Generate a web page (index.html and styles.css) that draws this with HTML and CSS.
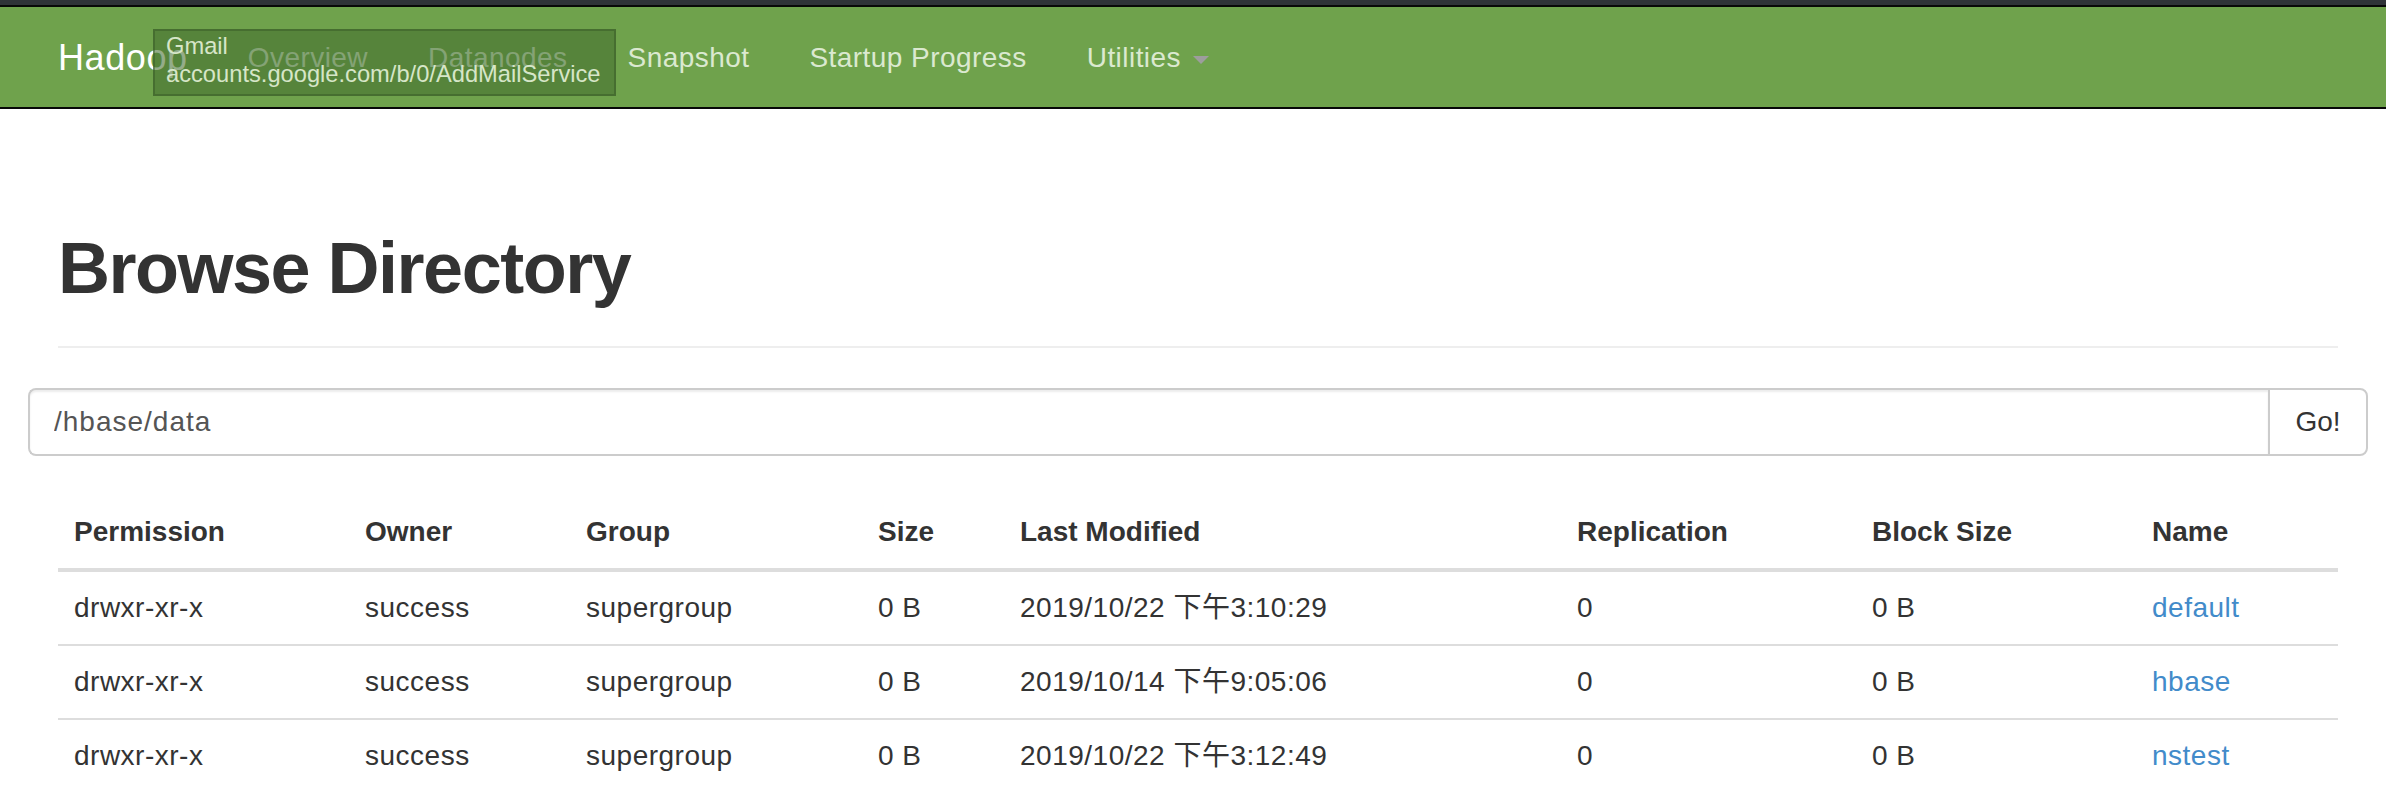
FILE: index.html
```html
<!DOCTYPE html>
<html lang="en">
<head>
<meta charset="utf-8">
<title>Browsing HDFS</title>
<link rel="stylesheet" href="styles.css">
</head>
<body>
<div class="chrome-strip"></div>
<header class="navbar">
  <div class="navbar-inner">
    <a class="brand" href="#">Hadoop</a>
    <ul class="nav">
      <li><a href="#">Overview</a></li>
      <li><a href="#">Datanodes</a></li>
      <li><a href="#">Snapshot</a></li>
      <li><a href="#">Startup Progress</a></li>
      <li><a href="#">Utilities <b class="caret"></b></a></li>
    </ul>
  </div>
</header>
<div class="tooltip">
  <div>Gmail</div>
  <div>accounts.google.com/b/0/AddMailService</div>
</div>
<main class="container">
  <div class="page-header">
    <h1>Browse Directory</h1>
  </div>
  <div class="input-group">
    <input class="form-control" type="text" value="/hbase/data">
    <button class="btn" type="button">Go!</button>
  </div>
  <table class="table">
    <colgroup>
      <col class="c-perm">
      <col class="c-owner">
      <col class="c-group">
      <col class="c-size">
      <col class="c-mod">
      <col class="c-rep">
      <col class="c-block">
      <col class="c-name">
    </colgroup>
    <thead>
      <tr>
        <th>Permission</th>
        <th>Owner</th>
        <th>Group</th>
        <th>Size</th>
        <th>Last Modified</th>
        <th>Replication</th>
        <th>Block Size</th>
        <th>Name</th>
      </tr>
    </thead>
    <tbody>
      <tr>
        <td>drwxr-xr-x</td>
        <td>success</td>
        <td>supergroup</td>
        <td>0 B</td>
        <td>2019/10/22 下午3:10:29</td>
        <td>0</td>
        <td>0 B</td>
        <td><a href="#">default</a></td>
      </tr>
      <tr>
        <td>drwxr-xr-x</td>
        <td>success</td>
        <td>supergroup</td>
        <td>0 B</td>
        <td>2019/10/14 下午9:05:06</td>
        <td>0</td>
        <td>0 B</td>
        <td><a href="#">hbase</a></td>
      </tr>
      <tr>
        <td>drwxr-xr-x</td>
        <td>success</td>
        <td>supergroup</td>
        <td>0 B</td>
        <td>2019/10/22 下午3:12:49</td>
        <td>0</td>
        <td>0 B</td>
        <td><a href="#">nstest</a></td>
      </tr>
    </tbody>
  </table>
</main>
</body>
</html>
```
FILE: styles.css
```css
* {
  box-sizing: border-box;
}

html,
body {
  margin: 0;
  padding: 0;
  background: #fff;
}

body {
  font-family: "Liberation Sans", "Noto Sans CJK SC", Arial, sans-serif;
  font-size: 28px;
  line-height: 40px;
  color: #333;
  overflow: hidden;
}

.chrome-strip {
  height: 5px;
  background: #2f3338;
}

.navbar {
  height: 104px;
  background: #6fa24c;
  border-top: 2px solid #080808;
  border-bottom: 2px solid #080808;
}

.navbar-inner {
  display: flex;
  height: 100px;
  margin-left: 28px;
}

.brand {
  display: block;
  padding: 31px 30px 29px;
  font-size: 36px;
  line-height: 40px;
  letter-spacing: 0.6px;
  color: #fff;
  text-decoration: none;
}

.nav {
  display: flex;
  margin: 0;
  padding: 0;
  list-style: none;
}

.nav a {
  display: block;
  padding: 31px 30px 29px;
  font-size: 28px;
  line-height: 40px;
  letter-spacing: 0.45px;
  color: #dbe9d0;
  text-decoration: none;
}

.caret {
  display: inline-block;
  width: 0;
  height: 0;
  margin-left: 4px;
  vertical-align: middle;
  border-top: 8px solid #9d9d9d;
  border-left: 8px solid transparent;
  border-right: 8px solid transparent;
}

.tooltip {
  position: absolute;
  left: 153px;
  top: 29px;
  width: 463px;
  height: 67px;
  padding: 1px 11px;
  background: rgba(67, 109, 48, 0.57);
  border: 2px solid rgba(50, 85, 35, 0.45);
  color: #d6e6c8;
  font-size: 23.7px;
  line-height: 28px;
  white-space: nowrap;
}

.container {
  width: 2340px;
  margin-left: 28px;
}

.page-header {
  margin: 0 30px;
  padding-top: 119px;
  padding-bottom: 38px;
  border-bottom: 2px solid #eee;
}

.page-header h1 {
  margin: 0;
  font-size: 72px;
  line-height: 80px;
  font-weight: 700;
  letter-spacing: -1.5px;
  color: #333;
}

.input-group {
  display: flex;
  height: 68px;
  margin-top: 40px;
}

.form-control {
  flex: 1;
  height: 68px;
  margin: 0;
  padding: 12px 24px;
  border: 2px solid #ccc;
  border-right: 0;
  border-radius: 8px 0 0 8px;
  box-shadow: inset 0 2px 2px rgba(0, 0, 0, 0.075);
  font-family: inherit;
  font-size: 28px;
  letter-spacing: 1px;
  color: #555;
  background: #fff;
  outline: none;
}

.btn {
  width: 100px;
  height: 68px;
  margin: 0;
  padding: 0;
  border: 2px solid #ccc;
  border-radius: 0 8px 8px 0;
  background: #fff;
  font-family: inherit;
  font-size: 28px;
  color: #333;
}

.table {
  width: 2280px;
  margin: 40px 30px 0;
  border-collapse: separate;
  border-spacing: 0;
  table-layout: fixed;
}

.c-perm { width: 291px; }
.c-owner { width: 221px; }
.c-group { width: 292px; }
.c-size { width: 142px; }
.c-mod { width: 557px; }
.c-rep { width: 295px; }
.c-block { width: 280px; }
.c-name { width: 202px; }

.table th,
.table td {
  padding: 16px;
  text-align: left;
  line-height: 40px;
  white-space: nowrap;
}

.table th {
  font-weight: 700;
  vertical-align: bottom;
  border-bottom: 4px solid #ddd;
}

.table td {
  vertical-align: top;
  letter-spacing: 0.5px;
  border-top: 2px solid #ddd;
}

.table tbody tr:first-child td {
  border-top: 0;
}

.table a {
  color: #428bca;
  text-decoration: none;
}
```
